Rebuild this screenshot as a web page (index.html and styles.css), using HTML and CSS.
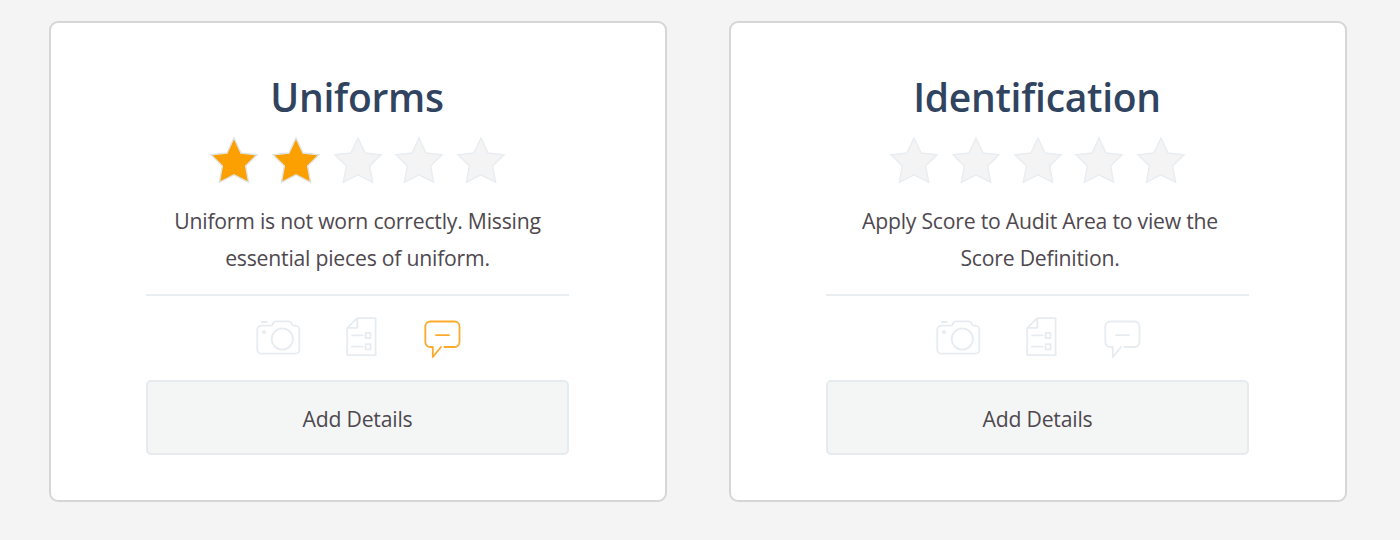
FILE: index.html
```
<!DOCTYPE html>
<html lang="en">
<head>
    <meta charset="UTF-8">
    <meta name="viewport" content="width=device-width, initial-scale=1.0">
    <title>Audit Areas</title>
    <link rel="stylesheet" href="styles.css">
</head>
<body>
    <!-- shared shapes -->
    <svg class="sprite">
        <symbol id="star" viewBox="0 0 50 48">
            <path d="M25 2 L32 17 L48 18.8 L36.6 30 L39.6 46.3 L25 38.8 L10.4 46.3 L13.4 30 L2 18.8 L18 17 Z"/>
        </symbol>
        <symbol id="camera" viewBox="0 0 46 44">
            <path d="M6.3 9.7 H15.6 Q17 9.7 17.6 8.3 L18.2 7 Q19 5.3 20.6 5.3 H34 Q35.6 5.3 36.4 7 L37 8.3 Q37.7 9.7 39 9.7 H40.3 A4 4 0 0 1 44.3 13.7 V33.7 A4 4 0 0 1 40.3 37.7 H6.3 A4 4 0 0 1 2.3 33.7 V13.7 A4 4 0 0 1 6.3 9.7 Z M6.7 6 H11.5"/>
            <circle cx="27.3" cy="23" r="10.6"/>
            <circle cx="9" cy="16" r="1.1"/>
        </symbol>
        <symbol id="form" viewBox="0 0 33 44">
            <path d="M12.3 2.2 H30.6 V39.2 H2.2 V11.8 Z M12.3 2.2 V11.8 H2.2 M7 19.3 H17.8 M7 30.7 H17.8"/>
            <path d="M20.6 16.8 H25.5 V22 H20.6 Z M20.6 28.2 H25.5 V33.3 H20.6 Z"/>
        </symbol>
        <symbol id="comment" viewBox="0 0 39 44">
            <path d="M21.3 31 H31.5 A5 5 0 0 0 36.5 26 V10.5 A5 5 0 0 0 31.5 5.5 H7.3 A5 5 0 0 0 2.3 10.5 V26 A5 5 0 0 0 7.3 31 H9.8 V41 L18 31 M13 19.2 H26"/>
        </symbol>
    </svg>

    <div class="cards">
        <div class="card">
            <h2 class="title">Uniforms</h2>
            <div class="stars">
                <svg class="star filled"><use href="#star"/></svg>
                <svg class="star filled"><use href="#star"/></svg>
                <svg class="star"><use href="#star"/></svg>
                <svg class="star"><use href="#star"/></svg>
                <svg class="star"><use href="#star"/></svg>
            </div>
            <p class="definition">Uniform is not worn correctly. Missing<br>essential pieces of uniform.</p>
            <div class="icons">
                <svg class="icon camera"><use href="#camera"/></svg>
                <svg class="icon form"><use href="#form"/></svg>
                <svg class="icon comment active"><use href="#comment"/></svg>
            </div>
            <button class="details-button">Add Details</button>
        </div>

        <div class="card">
            <h2 class="title">Identification</h2>
            <div class="stars">
                <svg class="star"><use href="#star"/></svg>
                <svg class="star"><use href="#star"/></svg>
                <svg class="star"><use href="#star"/></svg>
                <svg class="star"><use href="#star"/></svg>
                <svg class="star"><use href="#star"/></svg>
            </div>
            <p class="definition empty">Apply Score to Audit Area to view the<br>Score Definition.</p>
            <div class="icons">
                <svg class="icon camera"><use href="#camera"/></svg>
                <svg class="icon form"><use href="#form"/></svg>
                <svg class="icon comment"><use href="#comment"/></svg>
            </div>
            <button class="details-button">Add Details</button>
        </div>
    </div>
</body>
</html>
```
FILE: styles.css
```
* {
    box-sizing: border-box;
    margin: 0;
    padding: 0;
}

body {
    background: #f4f4f4;
    font-family: 'Open Sans', sans-serif;
    color: #4f484f;
}

.sprite {
    display: none;
}

.cards {
    display: flex;
    gap: 62px;
    padding: 21px 49px;
}

.card {
    width: 618px;
    height: 481px;
    flex: none;
    background: #fff;
    border: 2px solid #d6d6d6;
    border-radius: 9px;
    padding: 47px 96px 0 95px;
}

.title {
    font-size: 39px;
    font-weight: 600;
    line-height: 53px;
    letter-spacing: -0.28px;
    text-align: center;
    padding-right: 1px;
    color: #30435f;
}

.stars {
    display: flex;
    justify-content: center;
    gap: 11.65px;
    margin-top: 13px;
}

.star {
    width: 50px;
    height: 48px;
    fill: #f4f4f4;
    stroke: #e8edf1;
    stroke-width: 1.4;
}

.star.filled {
    fill: #fc9f00;
    stroke: #dfe3e2;
}

.definition {
    font-size: 21.2px;
    line-height: 37px;
    letter-spacing: -0.22px;
    text-align: center;
    white-space: nowrap;
    margin-top: 18px;
    padding-bottom: 18px;
    border-bottom: 2px solid #e9eef2;
}

.definition.empty {
    padding-left: 5px;
}

.icons {
    display: flex;
    justify-content: center;
    margin-top: 20px;
    padding-left: 2px;
}

.icon {
    height: 44px;
    fill: none;
    stroke: #e7ecf1;
    stroke-width: 1.8;
    stroke-linecap: round;
    stroke-linejoin: round;
}

.icon.active {
    stroke: #fbab2c;
}

.camera {
    width: 46px;
}

.form {
    width: 33px;
    margin: 0 45px 0 44px;
}

.comment {
    width: 39px;
}

.details-button {
    display: block;
    width: 100%;
    height: 75px;
    margin-top: 20px;
    padding-top: 2px;
    background: #f4f6f6;
    border: 2px solid #e6ebef;
    border-radius: 5px;
    font-family: inherit;
    font-size: 21.2px;
    letter-spacing: -0.22px;
    color: inherit;
}
```
